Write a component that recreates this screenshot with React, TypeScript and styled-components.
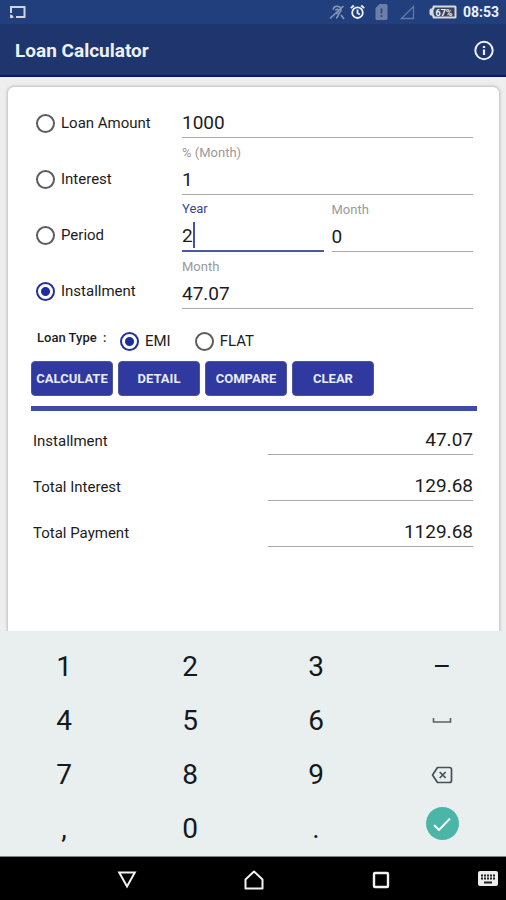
import React, { useState } from "react";
import styled, { createGlobalStyle, css } from "styled-components";

const GlobalStyle = createGlobalStyle`
  *, *::before, *::after { box-sizing: border-box; }
  body { margin: 0; background: #eeeeee; font-family: Roboto, sans-serif; color: #1c1c1c; }
  button, input { font-family: inherit; color: inherit; }
`;

const Screen = styled.div`
  display: flex;
  flex-direction: column;
  height: 100vh;
  overflow: hidden;
`;

const StatusBar = styled.div`
  display: flex;
  align-items: center;
  justify-content: space-between;
  flex: none;
  height: 24px;
  padding: 0 7px 0 9px;
  background: #223f7d;
  color: #eef2fb;
`;

const StatusIcons = styled.div`
  display: flex;
  align-items: center;
`;

const StatusIcon = styled.svg<{ $gap?: number }>`
  display: block;
  flex: none;
  margin-right: ${(p) => p.$gap ?? 0}px;
`;

const Clock = styled.span`
  font-size: 14px;
  font-weight: 700;
  line-height: 24px;
`;

const AppBar = styled.header`
  display: flex;
  align-items: center;
  justify-content: space-between;
  flex: none;
  height: 53px;
  padding: 2px 11px 0 15px;
  background: #1f356e;
  border-bottom: 2px solid #0f1465;
`;

const Title = styled.h1`
  margin: 0;
  font-size: 19px;
  line-height: 24px;
  font-weight: 700;
  color: #eef1f8;
`;

const IconButton = styled.button`
  display: flex;
  align-items: center;
  justify-content: center;
  padding: 0;
  border: 0;
  background: none;
`;

const Content = styled.main`
  display: flex;
  flex: 1;
  min-height: 0;
  padding: 10px 7px 0 8px;
  background: #eeeeee;
`;

const Card = styled.form`
  flex: 1;
  min-width: 0;
  padding: 0 26px 0 23px;
  border-radius: 6px 6px 0 0;
  background: #ffffff;
  box-shadow: 0 0 3px 1px #bdbdbd;
`;

const Fields = styled.div`
  display: grid;
  grid-template-columns: 146px 1fr;
  align-items: start;
  padding-left: 5px;
`;

const Choices = styled.div`
  display: flex;
  flex-direction: column;
  padding-top: 8px;
`;

const Inputs = styled.div`
  display: flex;
  flex-direction: column;
  margin-top: -6px;
`;

const RadioLabel = styled.label<{ $tall?: boolean }>`
  display: flex;
  align-items: center;
  gap: 6px;
  height: ${(p) => (p.$tall ? 56 : 20)}px;
  font-size: 15px;
  line-height: 20px;
  white-space: nowrap;
`;

const Radio = styled.input.attrs({ type: "radio" })`
  appearance: none;
  flex: none;
  width: 19px;
  height: 19px;
  margin: 0;
  border: 2px solid #5c5c5c;
  border-radius: 50%;
  background: #ffffff;

  &:checked {
    border-color: #22309a;
    background: radial-gradient(circle, #1c2c9c 0 4px, #ffffff 5px);
  }
`;

const FieldBox = styled.div<{ $active?: boolean }>`
  position: relative;
  display: flex;
  flex-direction: column;
  justify-content: flex-end;
  min-width: 0;
  height: 57px;
  border-bottom: 1px solid #a9a9a9;
  ${(p) =>
    p.$active &&
    css`
      border-bottom: 2px solid #4a5a9f;
    `}
`;

const FieldPair = styled.div`
  display: grid;
  grid-template-columns: 1fr 1fr;
  gap: 8px;
`;

const Caption = styled.label<{ $active?: boolean }>`
  padding-bottom: 5px;
  font-size: 13px;
  line-height: 16px;
  color: ${(p) => (p.$active ? "#3a4790" : "#9a9a9a")};
`;

const valueText = css`
  width: 100%;
  height: 28px;
  padding: 0;
  border: 0;
  outline: 0;
  background: none;
  font-size: 19px;
  line-height: 28px;
`;

const Value = styled.input`
  ${valueText}
  caret-color: transparent;
`;

const Caret = styled.span`
  position: absolute;
  bottom: 2px;
  width: 2px;
  height: 26px;
  background: #4654a0;
  font-size: 19px;
`;

const TypeRow = styled.div`
  display: flex;
  align-items: center;
  padding: 12px 0 0 6px;
`;

const TypeName = styled.span`
  width: 83px;
  padding-bottom: 6px;
  font-size: 13px;
  line-height: 14px;
  font-weight: 500;
  white-space: pre;
`;

const TypeOptions = styled.div`
  display: flex;
  gap: 24px;
`;

const Actions = styled.div`
  display: flex;
  gap: 5px;
  padding-top: 10px;
`;

const ActionButton = styled.button`
  width: 82px;
  height: 35px;
  padding: 0;
  border: 1px solid #4c5699;
  border-radius: 4px;
  background: #2f399f;
  color: #e9ecfa;
  font-size: 13px;
  font-weight: 700;
`;

const Divider = styled.hr`
  height: 5px;
  margin: 10px -4px 0 0;
  border: 0;
  background: #3d4ca4;
`;

const Results = styled.div`
  display: flex;
  flex-direction: column;
  padding: 12px 0 0 2px;
`;

const ResultRow = styled.div`
  display: flex;
  align-items: flex-start;
  justify-content: space-between;
  height: 46px;
`;

const ResultLabel = styled.label`
  padding-top: 8px;
  font-size: 15px;
  line-height: 20px;
`;

const ResultValue = styled.input`
  ${valueText}
  flex: 0 1 205px;
  width: 205px;
  height: 32px;
  padding-top: 2px;
  border-bottom: 1px solid #a9a9a9;
  text-align: right;
`;

const Keyboard = styled.div`
  display: grid;
  grid-template-columns: repeat(4, 1fr);
  grid-auto-rows: 54px;
  flex: none;
  position: relative;
  padding: 9px 1px 0;
  background: #e9eeef;
`;

const Key = styled.button`
  display: flex;
  align-items: center;
  justify-content: center;
  padding: 0;
  border: 0;
  background: none;
  color: #14191c;
  font-size: 28px;
  line-height: 32px;
`;

const EnterKey = styled(Key)`
  align-items: flex-start;
  padding-top: 5px;
`;

const EnterDisc = styled.span`
  display: flex;
  align-items: center;
  justify-content: center;
  width: 33px;
  height: 33px;
  border-radius: 50%;
  background: #4bb5a8;
`;

const NavBar = styled.nav`
  display: grid;
  grid-template-columns: 64px repeat(3, 1fr) 62px;
  align-items: center;
  flex: none;
  height: 44px;
  padding-top: 2px;
  border-top: 1px solid #7d8182;
  background: #000000;
`;

const ImeButton = styled(IconButton)`
  justify-content: flex-end;
  padding: 0 8px 2px 0;
`;

type Target = "amount" | "interest" | "period" | "installment";

const targets: { id: Target; label: string }[] = [
  { id: "amount", label: "Loan Amount" },
  { id: "interest", label: "Interest" },
  { id: "period", label: "Period" },
  { id: "installment", label: "Installment" },
];

const keys = ["1", "2", "3", "–", "4", "5", "6", "space", "7", "8", "9", "back", ",", "0", ".", "enter"];

function SpaceIcon() {
  return (
    <svg width="20" height="10" viewBox="0 0 20 10" fill="none" stroke="#596064" strokeWidth="1.6">
      <path d="M1.500 2v4h17V2" />
    </svg>
  );
}

function BackspaceIcon() {
  return (
    <svg width="22" height="18" viewBox="0 0 22 18" fill="none" stroke="#475055" strokeWidth="1.7" strokeLinejoin="round">
      <path d="M6.5 1.500h12a2 2 0 0 1 2 2v11a2 2 0 0 1-2 2h-12L1.500 9z" />
      <path d="M8.700 6l6 6M14.700 6l-6 6" strokeWidth="1.700" />
    </svg>
  );
}

function CheckIcon() {
  return (
    <svg width="18" height="14" viewBox="0 0 18 14" fill="none" stroke="#f4fffc" strokeWidth="2">
      <path d="M1 8l5 5L17 1.500" />
    </svg>
  );
}

function StatusStrip() {
  return (
    <StatusBar>
      <StatusIcon width="17" height="14" viewBox="0 0 17 14" fill="none" stroke="#cfd5df" strokeWidth="2">
        <path d="M2 8V2h13.500v10H7" />
        <path d="M1 9.500a3.500 3.500 0 0 1 3.500 3.500H1z" fill="#cfd5df" stroke="none" />
      </StatusIcon>
      <StatusIcons>
        <StatusIcon $gap={5} width="16" height="16" viewBox="0 0 16 16" fill="none" stroke="#8797b8" strokeWidth="1.600">
          <path d="M4 5.500a4.200 4.200 0 0 1 8-.5c.5 2-1 3.200-2 4.500s-.8 4-3 4.500" />
          <path d="M6.500 6.500c.5-2 3-1.500 3 0s-1.500 2-2.500 3.500M1 14.500L14.500 2M12 11l3 4" />
        </StatusIcon>
        <StatusIcon $gap={10} width="15" height="16" viewBox="0 0 15 16" fill="none" stroke="#eef2fb" strokeWidth="1.800">
          <circle cx="7.500" cy="8.700" r="5.300" />
          <path d="M7.500 5.500v3.500l2.300 1.500M.8 4.200l3-2.700M14.200 4.200l-3-2.700" />
        </StatusIcon>
        <StatusIcon $gap={12} width="13" height="16" viewBox="0 0 13 16">
          <path d="M4.500 0H11a1.500 1.500 0 0 1 1.500 1.500v13A1.500 1.500 0 0 1 11 16H2a1.500 1.500 0 0 1-1.500-1.500V4z" fill="#6b7fa9" />
          <path d="M6.500 4.500v5M6.500 11v2" stroke="#2b4682" strokeWidth="1.700" />
        </StatusIcon>
        <StatusIcon $gap={14} width="15" height="15" viewBox="0 0 15 15" fill="none" stroke="#6379a8" strokeWidth="1.300">
          <path d="M13.500 1.500v12H1.500z" />
        </StatusIcon>
        <StatusIcon $gap={6} width="28" height="14" viewBox="0 0 28 14">
          <path d="M4 .5h22a1.500 1.500 0 0 1 1.500 1.500v10a1.500 1.500 0 0 1-1.500 1.500H4L3 10.500H1.500L.5 9V5l1-1.500H3z" fill="#d5d9e0" />
          <path d="M6 2.500h19.500v9H6L4.500 9V5z" fill="#39435c" />
          <text x="15" y="10.500" textAnchor="middle" fontSize="9" fontWeight="700" fontFamily="Roboto, sans-serif" fill="#f2f4f8">
            67%
          </text>
        </StatusIcon>
        <Clock>08:53</Clock>
      </StatusIcons>
    </StatusBar>
  );
}

export default function App() {
  const [target, setTarget] = useState<Target>("installment");
  const [loanType, setLoanType] = useState("EMI");
  const [amount, setAmount] = useState("1000");
  const [interest, setInterest] = useState("1");
  const [years, setYears] = useState("2");
  const [months, setMonths] = useState("0");
  const [installment, setInstallment] = useState("47.07");
  const [results, setResults] = useState(["47.07", "129.68", "1129.68"]);

  const calculate = () => {
    const principal = Number(amount);
    const rate = Number(interest) / 100;
    const count = Number(years) * 12 + Number(months);
    if (!principal || !count) return;
    const raw =
      loanType === "FLAT" || rate === 0
        ? principal / count + principal * rate
        : (principal * rate) / (1 - Math.pow(1 + rate, -count));
    const each = Math.round(raw * 100) / 100;
    const total = each * count;
    setInstallment(each.toFixed(2));
    setResults([each.toFixed(2), (total - principal).toFixed(2), total.toFixed(2)]);
  };

  const clear = () => {
    [setAmount, setInterest, setYears, setMonths, setInstallment].forEach((set) => set(""));
    setResults(["", "", ""]);
  };

  const press = (key: string) => {
    if (key === "enter") calculate();
    else if (key === "back") setYears((v) => v.slice(0, -1));
    else if (/\d/.test(key)) setYears((v) => v + key);
  };

  return (
    <>
      <GlobalStyle />
      <Screen>
        <StatusStrip />
        <AppBar>
          <Title>Loan Calculator</Title>
          <IconButton type="button" aria-label="Information">
            <svg width="22" height="22" viewBox="0 0 22 22" fill="none" stroke="#eef1f8" strokeWidth="2">
              <circle cx="11" cy="10.500" r="8.700" />
              <path d="M11 9.500v5.500M11 6v2" strokeWidth="2.200" />
            </svg>
          </IconButton>
        </AppBar>
        <Content>
          <Card onSubmit={(e) => e.preventDefault()}>
            <Fields>
              <Choices role="radiogroup" aria-label="Value to calculate">
                {targets.map((t) => (
                  <RadioLabel key={t.id} $tall>
                    <Radio name="target" checked={target === t.id} onChange={() => setTarget(t.id)} />
                    {t.label}
                  </RadioLabel>
                ))}
              </Choices>
              <Inputs>
                <FieldBox>
                  <Value aria-label="Loan Amount" value={amount} onChange={(e) => setAmount(e.target.value)} />
                </FieldBox>
                <FieldBox>
                  <Caption htmlFor="interest">% (Month)</Caption>
                  <Value id="interest" value={interest} onChange={(e) => setInterest(e.target.value)} />
                </FieldBox>
                <FieldPair>
                  <FieldBox $active>
                    <Caption $active htmlFor="years">Year</Caption>
                    <Value id="years" value={years} onChange={(e) => setYears(e.target.value)} />
                    <Caret style={{ left: `${years.length}ch` }} />
                  </FieldBox>
                  <FieldBox>
                    <Caption htmlFor="months">Month</Caption>
                    <Value id="months" value={months} onChange={(e) => setMonths(e.target.value)} />
                  </FieldBox>
                </FieldPair>
                <FieldBox>
                  <Caption htmlFor="installment">Month</Caption>
                  <Value id="installment" value={installment} onChange={(e) => setInstallment(e.target.value)} />
                </FieldBox>
              </Inputs>
            </Fields>
            <TypeRow role="radiogroup" aria-labelledby="loan-type">
              <TypeName id="loan-type">{"Loan Type  :"}</TypeName>
              <TypeOptions>
                {["EMI", "FLAT"].map((t) => (
                  <RadioLabel key={t}>
                    <Radio name="loan-type" checked={loanType === t} onChange={() => setLoanType(t)} />
                    {t}
                  </RadioLabel>
                ))}
              </TypeOptions>
            </TypeRow>
            <Actions>
              <ActionButton type="button" onClick={calculate}>CALCULATE</ActionButton>
              <ActionButton type="button">DETAIL</ActionButton>
              <ActionButton type="button">COMPARE</ActionButton>
              <ActionButton type="button" onClick={clear}>CLEAR</ActionButton>
            </Actions>
            <Divider />
            <Results>
              {["Installment", "Total Interest", "Total Payment"].map((label, i) => (
                <ResultRow key={label}>
                  <ResultLabel htmlFor={`result-${i}`}>{label}</ResultLabel>
                  <ResultValue id={`result-${i}`} readOnly value={results[i]} />
                </ResultRow>
              ))}
            </Results>
          </Card>
        </Content>
        <Keyboard>
          {keys.map((key) =>
            key === "enter" ? (
              <EnterKey key={key} type="button" aria-label="Done" onClick={() => press(key)}>
                <EnterDisc>
                  <CheckIcon />
                </EnterDisc>
              </EnterKey>
            ) : (
              <Key key={key} type="button" aria-label={key} onClick={() => press(key)}>
                {key === "space" ? <SpaceIcon /> : key === "back" ? <BackspaceIcon /> : key}
              </Key>
            )
          )}
        </Keyboard>
        <NavBar>
          <span />
          <IconButton type="button" aria-label="Back">
            <svg width="20" height="18" viewBox="0 0 20 18" fill="none" stroke="#f2f2f2" strokeWidth="2">
              <path d="M2.200 1.500h15.600L10 15.500z" />
            </svg>
          </IconButton>
          <IconButton type="button" aria-label="Home">
            <svg width="20" height="20" viewBox="0 0 20 20" fill="none" stroke="#f2f2f2" strokeWidth="2" strokeLinejoin="round">
              <path d="M1.500 18.500V9.500L10 1.500l8.500 8v9z" />
            </svg>
          </IconButton>
          <IconButton type="button" aria-label="Recent apps">
            <svg width="18" height="18" viewBox="0 0 18 18" fill="none" stroke="#f2f2f2" strokeWidth="2.400">
              <rect x="2" y="2" width="14" height="14" rx="1" />
            </svg>
          </IconButton>
          <ImeButton type="button" aria-label="Choose keyboard">
            <svg width="20" height="15" viewBox="0 0 20 15">
              <rect width="20" height="15" rx="2" fill="#ededed" />
              <path d="M3 4.500h14M3 7.500h14" stroke="#202020" strokeWidth="2" strokeDasharray="2 1" />
              <path d="M6 11.500h8" stroke="#202020" strokeWidth="2" />
            </svg>
          </ImeButton>
        </NavBar>
      </Screen>
    </>
  );
}
